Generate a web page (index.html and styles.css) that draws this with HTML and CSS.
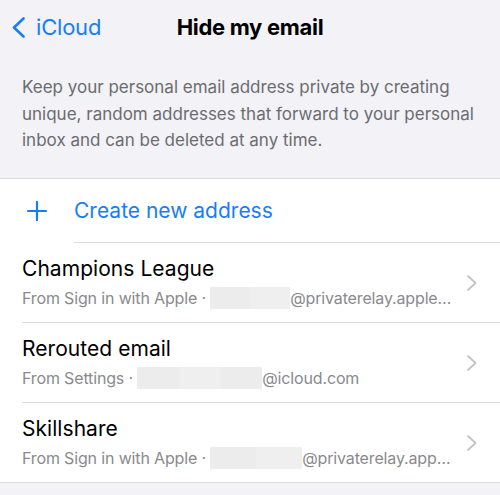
FILE: index.html
```html
<!DOCTYPE html>
<html lang="en">

<head>
  <meta charset="UTF-8" />
  <meta name="viewport" content="width=device-width, initial-scale=1.0" />
  <title>Hide my email</title>
  <link rel="stylesheet" href="styles.css">
</head>

<body>
  <!-- Top navigation bar -->
  <header class="nav">
    <a class="back" href="#">
      <svg class="back-icon" width="15" height="21" viewBox="0 0 15 21">
        <path d="M12.5 1.5 L3 10.5 L12.5 19.5" fill="none" stroke="currentColor" stroke-width="2.6" stroke-linecap="round" stroke-linejoin="round" />
      </svg>
      <span>iCloud</span>
    </a>
    <h1 class="title">Hide my email</h1>
    <div></div>
  </header>

  <p class="intro">Keep your personal email address private by creating unique, random addresses that forward to your personal inbox and can be deleted at any time.</p>

  <!-- Address list -->
  <ul class="list">
    <li class="create">
      <svg class="plus" width="20" height="20" viewBox="0 0 20 20">
        <path d="M10 1 V19 M1 10 H19" stroke="currentColor" stroke-width="2.2" stroke-linecap="round" />
      </svg>
      <span class="create-label">Create new address</span>
    </li>

    <li class="row">
      <div class="row-text">
        <div class="row-title">Champions League</div>
        <div class="row-sub">From Sign in with Apple · <span class="mask"><i></i><i></i></span>@privaterelay.appleid.com</div>
      </div>
      <svg class="chevron" width="12" height="18" viewBox="0 0 12 18"><path d="M2 2 L9.5 9 L2 16" fill="none" stroke="currentColor" stroke-width="1.8" stroke-linecap="round" stroke-linejoin="round" /></svg>
    </li>

    <li class="row">
      <div class="row-text">
        <div class="row-title">Rerouted email</div>
        <div class="row-sub">From Settings · <span class="mask mask-wide"><i></i><i></i><i></i></span>@icloud.com</div>
      </div>
      <svg class="chevron" width="12" height="18" viewBox="0 0 12 18"><path d="M2 2 L9.5 9 L2 16" fill="none" stroke="currentColor" stroke-width="1.8" stroke-linecap="round" stroke-linejoin="round" /></svg>
    </li>

    <li class="row">
      <div class="row-text">
        <div class="row-title">Skillshare</div>
        <div class="row-sub">From Sign in with Apple · <span class="mask mask-mid"><i></i><i></i></span>@privaterelay.appleid.com</div>
      </div>
      <svg class="chevron" width="12" height="18" viewBox="0 0 12 18"><path d="M2 2 L9.5 9 L2 16" fill="none" stroke="currentColor" stroke-width="1.8" stroke-linecap="round" stroke-linejoin="round" /></svg>
    </li>
  </ul>
</body>

</html>
```

FILE: styles.css
```css
* {
  box-sizing: border-box;
}

body {
  margin: 0;
  background: #f2f2f7;
  font-family: Inter, "Noto Sans", sans-serif;
  color: #000;
}

/* Navigation bar */
.nav {
  display: grid;
  grid-template-columns: 1fr auto 1fr;
  align-items: center;
  height: 54px;
}

.back {
  display: flex;
  align-items: center;
  gap: 10px;
  padding-left: 11px;
  color: #157efb;
  text-decoration: none;
  font-size: 22px;
  letter-spacing: -0.2px;
}

.title {
  margin: 0;
  font-size: 22px;
  font-weight: 700;
  letter-spacing: -0.3px;
}

.intro {
  margin: 0;
  padding: 20px 22px 24px;
  font-size: 17px;
  line-height: 26.5px;
  color: #6c6c70;
}

/* Grouped list */
.list {
  list-style: none;
  margin: 0;
  padding: 0;
  background: #fff;
  border-top: 1px solid #dcdce0;
  border-bottom: 1px solid #dcdce0;
}

.create {
  display: flex;
  align-items: center;
  height: 64px;
  color: #157efb;
}

.plus {
  margin-left: 27px;
  margin-right: 27px;
}

.create-label {
  flex: 1;
  align-self: stretch;
  display: flex;
  align-items: center;
  font-size: 21px;
  border-bottom: 1px solid #dcdce0;
  padding-top: 1px;
}

.row {
  display: flex;
  align-items: center;
  height: 80px;
  margin-left: 22px;
  padding-right: 22px;
  border-bottom: 1px solid #dcdce0;
}

.row:last-child {
  border-bottom: none;
  height: 79px;
}

.row-text {
  flex: 1;
  min-width: 0;
  padding-right: 12px;
}

.row-title {
  font-size: 21px;
  line-height: 28px;
  letter-spacing: 0.05px;
}

.row-sub {
  margin-top: 4px;
  font-size: 16px;
  line-height: 22px;
  letter-spacing: -0.15px;
  color: #8a8a8e;
  white-space: nowrap;
  overflow: hidden;
  text-overflow: ellipsis;
}

/* Blurred-out parts of the addresses */
.mask {
  display: inline-flex;
  vertical-align: middle;
  width: 80px;
  height: 22px;
  margin-top: -3px;
}

.mask i {
  flex: 1;
  background: #ececec;
}

.mask i:nth-child(2) {
  background: #efefef;
}

.mask-wide {
  width: 125px;
}

.mask-mid {
  width: 92px;
}

.chevron {
  color: #c4c4c7;
  flex-shrink: 0;
  margin-top: 2px;
}
```
